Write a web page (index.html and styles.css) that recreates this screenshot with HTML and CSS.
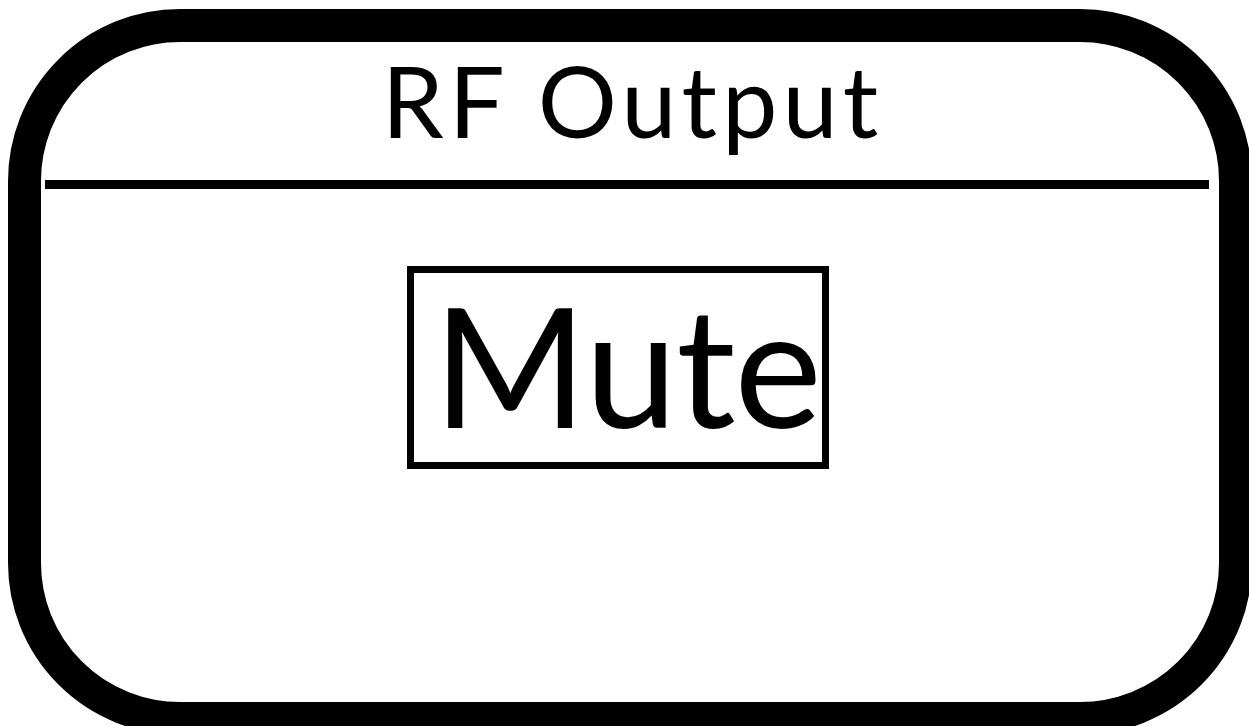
FILE: index.html
```html
<!DOCTYPE html>
<html lang="en">
<head>
  <meta charset="UTF-8">
  <meta name="viewport" content="width=device-width, initial-scale=1.0">
  <title>RF Output</title>
  <link rel="stylesheet" href="styles.css">
</head>
<body>
  <div class="screen">
    <h1 class="title">RF Output</h1>
    <div class="divider"></div>
    <div class="value-row">
      <div class="value">Mute</div>
    </div>
  </div>
</body>
</html>
```
FILE: styles.css
```css
html, body {
  margin: 0;
  padding: 0;
  background-color: #fff;
  overflow: hidden;
}
body {
  font-family: Lato, "Open Sans", sans-serif;
  color: #000;
  width: 1249px;
  height: 726px;
}
.screen {
  box-sizing: border-box;
  margin: 9px 0 0 8px;
  width: 1244px;
  height: 726px;
  border: 33px solid #000;
  border-radius: 172px;
  display: flex;
  flex-direction: column;
}
.title {
  margin: 8px 0 0 0;
  padding-left: 5px;
  font-size: 99px;
  line-height: 100px;
  font-weight: normal;
  letter-spacing: 5px;
  text-align: center;
}
.divider {
  height: 9px;
  background-color: #000;
  margin: 30px 10px 0 4px;
}
.value-row {
  display: flex;
  justify-content: center;
  margin-top: 77px;
  padding-right: 24px;
}
.value {
  box-sizing: border-box;
  width: 422px;
  height: 203px;
  border: 7px solid #000;
  padding: 6px 0 0 19px;
  font-size: 166px;
  line-height: 170px;
  letter-spacing: -1px;
  white-space: nowrap;
}
```
